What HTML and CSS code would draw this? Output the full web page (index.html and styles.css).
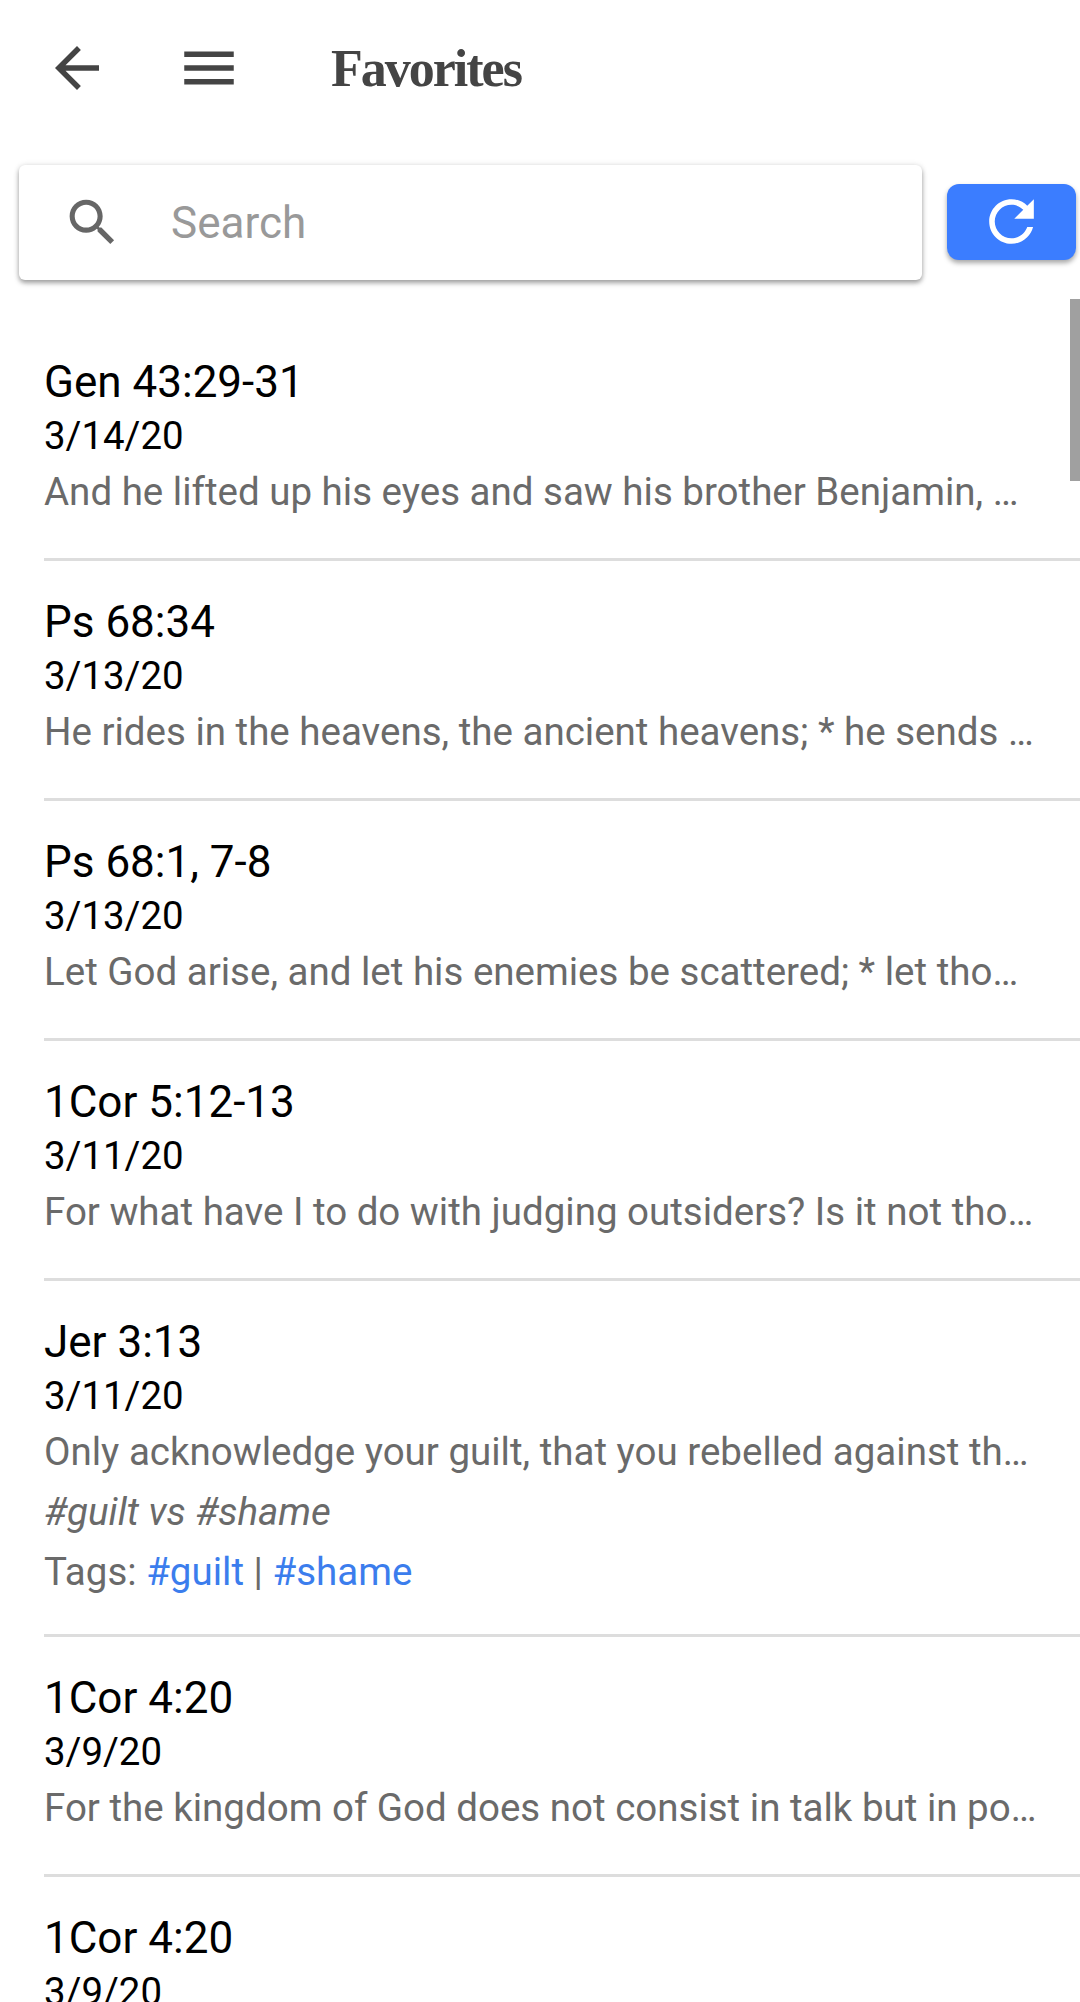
FILE: index.html
```html
<!DOCTYPE html>
<html lang="en">
<head>
    <meta charset="UTF-8">
    <meta name="viewport" content="width=device-width, initial-scale=1.0">
    <title>Favorites</title>
    <link rel="stylesheet" href="styles.css">
</head>
<body>
    <div class="header">
        <svg class="back-icon" viewBox="0 0 24 24"><path d="M20 11H7.83l5.59-5.59L12 4l-8 8 8 8 1.41-1.41L7.83 13H20v-2z"/></svg>
        <svg class="menu-icon" viewBox="0 0 24 24"><path d="M3 18h18v-2H3v2zm0-5h18v-2H3v2zm0-7v2h18V6H3z"/></svg>
        <h1>Favorites</h1>
    </div>

    <div class="search-row">
        <div class="search-box">
            <svg class="search-icon" viewBox="0 0 24 24"><path d="M15.5 14h-.79l-.28-.27C15.41 12.59 16 11.11 16 9.5 16 5.91 13.09 3 9.5 3S3 5.91 3 9.5 5.91 16 9.5 16c1.61 0 3.09-.59 4.23-1.57l.27.28v.79l5 4.99L20.49 19l-4.99-5zm-6 0C7.01 14 5 11.99 5 9.5S7.01 5 9.5 5 14 7.01 14 9.5 11.99 14 9.5 14z"/></svg>
            <span class="placeholder">Search</span>
        </div>
        <button class="refresh-btn">
            <svg viewBox="0 0 24 24"><path d="M17.65 6.35C16.2 4.9 14.21 4 12 4c-4.42 0-7.99 3.58-7.99 8s3.57 8 7.99 8c3.73 0 6.84-2.55 7.73-6h-2.08c-.82 2.33-3.04 4-5.65 4-3.31 0-6-2.69-6-6s2.69-6 6-6c1.66 0 3.14.69 4.22 1.78L13 11h7V4l-2.35 2.35z"/></svg>
        </button>
    </div>

    <div class="list">
        <div class="scroll-thumb"></div>

        <div class="item">
            <div class="ref">Gen 43:29-31</div>
            <div class="date">3/14/20</div>
            <div class="line">And he lifted up his eyes and saw his brother Benjamin, …</div>
        </div>
        <div class="item">
            <div class="ref">Ps 68:34</div>
            <div class="date">3/13/20</div>
            <div class="line">He rides in the heavens, the ancient heavens; * he sends …</div>
        </div>
        <div class="item">
            <div class="ref">Ps 68:1, 7-8</div>
            <div class="date">3/13/20</div>
            <div class="line">Let God arise, and let his enemies be scattered; * let tho…</div>
        </div>
        <div class="item">
            <div class="ref">1Cor 5:12-13</div>
            <div class="date">3/11/20</div>
            <div class="line">For what have I to do with judging outsiders? Is it not tho…</div>
        </div>
        <div class="item tagged">
            <div class="ref">Jer 3:13</div>
            <div class="date">3/11/20</div>
            <div class="line">Only acknowledge your guilt, that you rebelled against th…</div>
            <div class="line note">#guilt vs #shame</div>
            <div class="line">Tags: <a href="#">#guilt</a> | <a href="#">#shame</a></div>
        </div>
        <div class="item">
            <div class="ref">1Cor 4:20</div>
            <div class="date">3/9/20</div>
            <div class="line">For the kingdom of God does not consist in talk but in po…</div>
        </div>
        <div class="item">
            <div class="ref">1Cor 4:20</div>
            <div class="date">3/9/20</div>
        </div>
    </div>
</body>
</html>
```

FILE: styles.css
```css
html, body {
    margin: 0;
    padding: 0;
    height: 2002px;
    overflow: hidden;
    background: #fff;
    font-family: Roboto, sans-serif;
}

.header {
    display: flex;
    align-items: center;
    height: 136px;
    padding-left: 44px;
    color: #444;
}

.header svg {
    width: 66px;
    height: 66px;
    fill: #444;
}

.menu-icon {
    margin-left: 66px;
}

h1 {
    margin: 0 0 0 89px;
    font-family: "Liberation Serif", serif;
    font-size: 52px;
    font-weight: bold;
    letter-spacing: -2px;
    color: #444;
}

.search-row {
    display: flex;
    align-items: center;
    height: 115px;
    margin-top: 29px;
    padding-left: 19px;
}

.search-box {
    display: flex;
    align-items: center;
    width: 903px;
    height: 115px;
    background: #fff;
    border-radius: 6px;
    box-shadow: 0 3px 5px rgba(0, 0, 0, 0.35), 0 0 6px rgba(0, 0, 0, 0.1);
}

.search-icon {
    width: 61px;
    height: 61px;
    margin-left: 43px;
    fill: #666;
}

.placeholder {
    margin-left: 48px;
    font-size: 44px;
    color: #999;
}

.refresh-btn {
    display: flex;
    align-items: center;
    justify-content: center;
    width: 129px;
    height: 76px;
    margin: 0 0 2px 25px;
    padding: 0;
    border: none;
    border-radius: 12px;
    background: #3b7dff;
    box-shadow: 0 3px 5px rgba(0, 0, 0, 0.35);
}

.refresh-btn svg {
    width: 67px;
    height: 67px;
    fill: #fff;
}

.list {
    position: relative;
    margin-top: 41px;
    padding-left: 44px;
}

.scroll-thumb {
    position: absolute;
    top: -22px;
    right: 0;
    width: 10px;
    height: 182px;
    background: #a0a0a0;
}

.item {
    padding: 33px 0 36px;
    border-bottom: 3px solid #ddd;
}

.item.tagged {
    padding-bottom: 32px;
}

.ref {
    font-size: 44px;
    line-height: 56px;
    color: #000;
}

.date {
    font-size: 38.4px;
    line-height: 52px;
    color: #000;
}

.line {
    font-size: 38.5px;
    line-height: 60px;
    color: #6a6a6a;
    white-space: nowrap;
}

.note {
    font-style: italic;
}

a {
    color: #3b7ded;
    text-decoration: none;
}
```
